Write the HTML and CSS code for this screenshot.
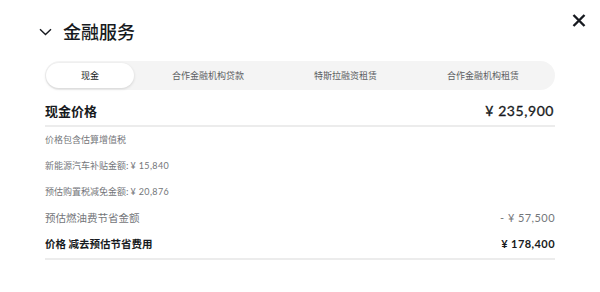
FILE: index.html
```html
<!DOCTYPE html>
<html lang="zh-CN">
<head>
<meta charset="utf-8">
<title>金融服务</title>
<link rel="stylesheet" href="styles.css">
</head>
<body>
<div class="modal">
  <button class="close" aria-label="关闭">
    <svg width="14" height="13" viewBox="0 0 14 13"><path d="M1.5 1 L12.5 12 M12.5 1 L1.5 12" stroke="#171a20" stroke-width="2.4" stroke-linecap="butt" fill="none"/></svg>
  </button>
  <div class="content">
    <div class="header">
      <svg class="chev" width="13" height="8" viewBox="0 0 13 8"><path d="M1 1.2 L6.5 6.5 L12 1.2" stroke="#171a20" stroke-width="1.4" fill="none"/></svg>
      <h1 class="title">金融服务</h1>
    </div>
    <div class="tabs">
      <div class="tab active">现金</div>
      <div class="tab">合作金融机构贷款</div>
      <div class="tab">特斯拉融资租赁</div>
      <div class="tab">合作金融机构租赁</div>
    </div>
    <div class="price-row">
      <span class="price-label">现金价格</span>
      <span class="num price-value">¥ 235,900</span>
    </div>
    <div class="details">
      <div class="line small">价格包含估算增值税</div>
      <div class="line small">新能源汽车补贴金额: <span class="num">¥ 15,840</span></div>
      <div class="line small">预估购置税减免金额: <span class="num">¥ 20,876</span></div>
      <div class="line medium row"><span>预估燃油费节省金额</span><span class="num">- ¥ 57,500</span></div>
      <div class="line medium row strong"><span>价格 减去预估节省费用</span><span class="num">¥ 178,400</span></div>
    </div>
  </div>
</div>
</body>
</html>
```
FILE: styles.css
```css
html, body {
  margin: 0;
  padding: 0;
  background: #ffffff;
}
body {
  font-family: "Noto Sans CJK SC", "Noto Sans", sans-serif;
  color: #171a20;
}
.modal {
  position: relative;
  width: 600px;
  height: 292px;
}
.close {
  position: absolute;
  top: 13px;
  left: 571px;
  width: 16px;
  height: 15px;
  padding: 0;
  border: 0;
  background: transparent;
  display: flex;
  align-items: center;
  justify-content: center;
}
.content {
  width: 510px;
  margin-left: 45px;
  padding-top: 18px;
}
.header {
  display: flex;
  align-items: center;
  gap: 11px;
  margin-left: -6px;
  height: 26px;
}
.chev {
  display: block;
  margin-top: 1px;
}
.title {
  margin: 0;
  font-size: 18px;
  line-height: 26px;
  font-weight: 500;
  color: #171a20;
}
.tabs {
  margin-top: 17px;
  height: 29px;
  background: #f4f4f4;
  border-radius: 15px;
  display: flex;
  padding: 1px;
  box-sizing: border-box;
}
.tab {
  flex: 1 1 auto;
  text-align: center;
  font-size: 9px;
  line-height: 27px;
  color: #5c5e62;
  border-radius: 14px;
  white-space: nowrap;
}
.tab.active {
  color: #171a20;
  background: #ffffff;
  box-shadow: 0 1px 3px rgba(0,0,0,0.14);
  margin: 1px 3px 1px 0;
  line-height: 25px;
}
.num {
  font-family: "Lato", "Noto Sans", sans-serif;
  letter-spacing: 0.04em;
}
.price-row {
  margin-top: 10px;
  display: flex;
  justify-content: space-between;
  align-items: center;
  height: 20px;
  padding-bottom: 5px;
  border-bottom: 2px solid #ececec;
}
.price-label {
  font-size: 13px;
  font-weight: 700;
}
.price-value {
  font-size: 14px;
  font-weight: 400;
  color: #171a20;
  -webkit-text-stroke: 0.3px #171a20;
  margin-right: 1px;
}
.details {
  border-bottom: 2px solid #ececec;
  padding-bottom: 1px;
}
.line {
  height: 26px;
  line-height: 26px;
  color: #74767a;
  white-space: nowrap;
}
.small {
  font-size: 9px;
}
.medium {
  font-size: 10.5px;
}
.medium .num {
  font-size: 11px;
}
.row {
  display: flex;
  justify-content: space-between;
}
.strong {
  color: #171a20;
  font-weight: 700;
}
.strong .num {
  font-weight: 700;
}
```
